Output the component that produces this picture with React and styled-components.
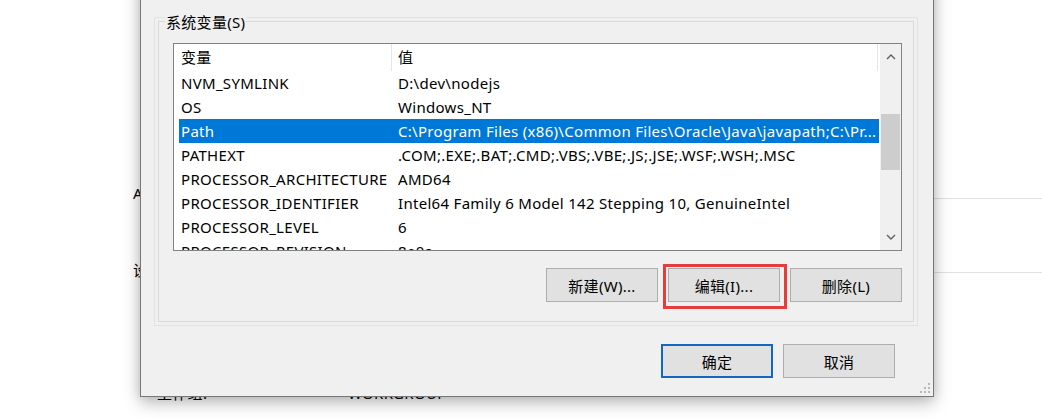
import React from "react";
import styled, { createGlobalStyle } from "styled-components";

const FONT = `"Noto Sans", "Noto Sans CJK SC", sans-serif`;

const GlobalStyle = createGlobalStyle`
  html, body { margin: 0; padding: 0; background: #fff; }
  body { font-family: ${FONT}; font-size: 15px; color: #000; letter-spacing: 0.3px; }
  * { box-sizing: border-box; }
`;

const Screen = styled.div`
  position: relative;
  width: 1042px;
  height: 419px;
  overflow: hidden;
  background: #fff;
`;

/* ---------- window behind the dialog ---------- */
const BackWindow = styled.div`
  display: flex;
  flex-direction: column;
  padding: 183px 0 0 133px;
`;

const BackRow = styled.div`
  display: flex;
  height: 20px;
  margin-top: ${(p) => p.$gap || 0}px;
  padding-left: ${(p) => p.$indent || 0}px;
  line-height: 20px;
  white-space: nowrap;
`;

const BackLabel = styled.span`
  width: ${(p) => p.$w}px;
  flex: none;
`;

const BackRule = styled.div`
  flex: 1;
  height: 1px;
  margin-top: ${(p) => p.$at}px;
  background: #e1e1e1;
`;

/* ---------- dialog ---------- */
const Dialog = styled.div`
  position: absolute;
  left: 140px;
  top: -40px;
  width: 794px;
  height: 437px;
  display: flex;
  flex-direction: column;
  padding: 56px 15px 18px 13px;
  background: #f0f0f0;
  border: 1px solid #777;
  box-shadow: 0 6px 16px rgba(0, 0, 0, 0.26), 0 0 10px rgba(0, 0, 0, 0.12);
`;

const GroupBox = styled.div`
  position: relative;
  height: 309px;
  flex: none;
  display: flex;
  flex-direction: column;
  padding: 25px 15px 23px 18px;
  border: 1px solid #e2e2e2;
  box-shadow: inset 0 0 0 3px #f0f0f0, inset 0 0 0 4px #dadada;
`;

const GroupLabel = styled.span`
  position: absolute;
  top: -6px;
  left: 10px;
  padding: 0 1px;
  line-height: 20px;
  background: #f0f0f0;
`;

const ListBox = styled.div`
  display: flex;
  height: 208px;
  flex: none;
  border: 1px solid #828282;
  background: #fff;
  overflow: hidden;
`;

const ListBody = styled.div`
  flex: 1;
  min-width: 0;
  display: flex;
  flex-direction: column;
  overflow: hidden;
`;

const HeaderRow = styled.div`
  display: flex;
  height: 27px;
  flex: none;
`;

const HeaderCell = styled.div`
  width: ${(p) => p.$w}px;
  flex: none;
  padding-left: ${(p) => p.$pad}px;
  line-height: 27px;
  border-right: 1px solid #e5e5e5;
`;

const Row = styled.div`
  display: flex;
  width: 700px;
  height: 24px;
  flex: none;
  margin-left: 5px;
  line-height: 24px;
  white-space: nowrap;
  background: ${(p) => (p.$selected ? "#0078d7" : "transparent")};
  color: ${(p) => (p.$selected ? "#fff" : "#000")};
`;

const NameCell = styled.div`
  width: 212px;
  flex: none;
  padding-left: 2px;
  overflow: hidden;
`;

const ValueCell = styled.div`
  flex: 1;
  min-width: 0;
  padding: 0 3px 0 7px;
  overflow: hidden;
`;

const ScrollBar = styled.div`
  width: 21px;
  flex: none;
  display: flex;
  flex-direction: column;
  background: #f0f0f0;
`;

const ScrollArrow = styled.div`
  height: 26px;
  flex: none;
  display: flex;
  align-items: center;
  justify-content: center;
`;

const ScrollTrack = styled.div`
  flex: 1;
  padding: 0 1px;
`;

const ScrollThumb = styled.div`
  height: 56px;
  margin-top: 44px;
  background: #cdcdcd;
`;

const ButtonRow = styled.div`
  display: flex;
  justify-content: flex-end;
  gap: 10px;
  flex: none;
  margin-top: ${(p) => p.$top}px;
  margin-right: ${(p) => p.$right || 0}px;
`;

const Button = styled.button`
  width: 112px;
  height: 34px;
  flex: none;
  padding: 0;
  font-family: ${FONT};
  font-size: 15px;
  letter-spacing: 0.3px;
  color: #000;
  background: #e1e1e1;
  border: ${(p) => (p.$default ? "2px solid #1467c0" : "1px solid #adadad")};
`;

const Annotated = styled.div`
  position: relative;
  display: flex;
`;

const RedMark = styled.span`
  position: absolute;
  top: -4px;
  left: -5px;
  right: -7px;
  bottom: -7px;
  border: 3px solid #e53c3c;
  pointer-events: none;
`;

const Grip = styled.svg`
  position: absolute;
  right: 2px;
  bottom: 2px;
`;

const Chevron = ({ down }) => (
  <svg width="10" height="6" viewBox="0 0 10 6">
    <path
      d={down ? "M1 1 L5 5 L9 1" : "M1 5 L5 1 L9 5"}
      fill="none"
      stroke="#606060"
      strokeWidth="1.4"
    />
  </svg>
);

const rows = [
  ["NVM_SYMLINK", "D:\\dev\\nodejs"],
  ["OS", "Windows_NT"],
  [
    "Path",
    "C:\\Program Files (x86)\\Common Files\\Oracle\\Java\\javapath;C:\\Pr...",
    true,
  ],
  ["PATHEXT", ".COM;.EXE;.BAT;.CMD;.VBS;.VBE;.JS;.JSE;.WSF;.WSH;.MSC"],
  ["PROCESSOR_ARCHITECTURE", "AMD64"],
  ["PROCESSOR_IDENTIFIER", "Intel64 Family 6 Model 142 Stepping 10, GenuineIntel"],
  ["PROCESSOR_LEVEL", "6"],
  ["PROCESSOR_REVISION", "8e0a"],
];

export default function App() {
  return (
    <Screen>
      <GlobalStyle />
      <BackWindow>
        <BackRow>
          <BackLabel $w={480}>A</BackLabel>
          <BackRule $at={15} />
        </BackRow>
        <BackRow $gap={57}>
          <BackLabel $w={480}>设</BackLabel>
          <BackRule $at={12} />
        </BackRow>
        <BackRow $gap={103} $indent={24}>
          <BackLabel $w={191}>工作组:</BackLabel>
          <BackLabel $w={200}>WORKGROUP</BackLabel>
        </BackRow>
      </BackWindow>

      <Dialog>
        <GroupBox>
          <GroupLabel>系统变量(S)</GroupLabel>
          <ListBox>
            <ListBody>
              <HeaderRow>
                <HeaderCell $w={218} $pad={7}>变量</HeaderCell>
                <HeaderCell $w={486} $pad={6}>值</HeaderCell>
              </HeaderRow>
              {rows.map(([name, value, sel]) => (
                <Row key={name} $selected={sel}>
                  <NameCell>{name}</NameCell>
                  <ValueCell>{value}</ValueCell>
                </Row>
              ))}
            </ListBody>
            <ScrollBar>
              <ScrollArrow>
                <Chevron />
              </ScrollArrow>
              <ScrollTrack>
                <ScrollThumb />
              </ScrollTrack>
              <ScrollArrow>
                <Chevron down />
              </ScrollArrow>
            </ScrollBar>
          </ListBox>
          <ButtonRow $top={17}>
            <Button>新建(W)...</Button>
            <Annotated>
              <Button>编辑(I)...</Button>
              <RedMark />
            </Annotated>
            <Button>删除(L)</Button>
          </ButtonRow>
        </GroupBox>
        <ButtonRow $top={18} $right={23}>
          <Button $default>确定</Button>
          <Button>取消</Button>
        </ButtonRow>
        <Grip width="11" height="11" viewBox="0 0 11 11">
          {[
            [9, 1],
            [5, 5],
            [9, 5],
            [1, 9],
            [5, 9],
            [9, 9],
          ].map(([x, y]) => (
            <rect key={`${x}-${y}`} x={x - 1} y={y - 1} width="2" height="2" fill="#b8b8b8" />
          ))}
        </Grip>
      </Dialog>
    </Screen>
  );
}
